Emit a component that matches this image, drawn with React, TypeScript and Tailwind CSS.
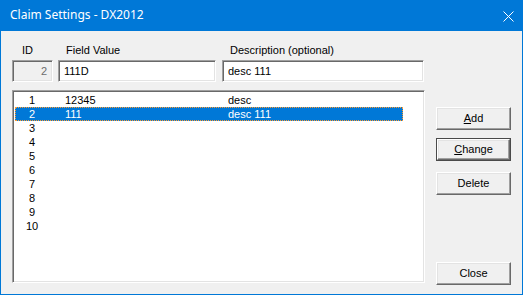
import React from "react";

const sunken =
  "border border-t-[#a0a0a0] border-l-[#a0a0a0] border-r-white border-b-white shadow-[inset_1px_1px_0_#696969,inset_-1px_-1px_0_#e3e3e3]";

function Btn({ children, def, className = "" }: { children: React.ReactNode; def?: boolean; className?: string }) {
  if (def) {
    return (
      <div className={`w-[75px] h-[23px] border border-[#4a4a4a] ${className}`}>
        <div className="w-full h-full border border-t-white border-l-white border-r-[#696969] border-b-[#696969] shadow-[inset_-1px_-1px_0_#a0a0a0,inset_1px_1px_0_#e3e3e3] bg-[#f0f0f0] flex items-center justify-center leading-[13px]">
          {children}
        </div>
      </div>
    );
  }
  return (
    <div
      className={`w-[75px] h-[23px] border border-t-white border-l-white border-r-[#696969] border-b-[#696969] shadow-[inset_-1px_-1px_0_#a0a0a0,inset_1px_1px_0_#e3e3e3] bg-[#f0f0f0] flex items-center justify-center leading-[13px] ${className}`}
    >
      {children}
    </div>
  );
}

const rows = [
  { id: "1", val: "12345", desc: "desc" },
  { id: "2", val: "111", desc: "desc 111", sel: true },
  { id: "3" },
  { id: "4" },
  { id: "5" },
  { id: "6" },
  { id: "7" },
  { id: "8" },
  { id: "9" },
  { id: "10" },
] as { id: string; val?: string; desc?: string; sel?: boolean }[];

export default function App() {
  return (
    <div
      className="w-[523px] h-[295px] bg-[#0078d7] flex flex-col text-[11px] text-black"
      style={{ fontFamily: '"Liberation Sans", Arial, sans-serif' }}
    >
      <div className="h-[31px] flex items-center justify-between pl-[10px] pr-[10px] text-white">
        <span className="text-[12px] leading-[16px] pb-[1px]" style={{ fontFamily: '"Noto Sans", "Liberation Sans", sans-serif' }}>
          Claim Settings - DX2012
        </span>
        <svg width="11" height="11" viewBox="0 0 11 11" className="-mr-[1px] mt-[1px]">
          <path d="M0.5 0.5 L10.5 10.5 M10.5 0.5 L0.5 10.5" stroke="white" strokeWidth="1" />
        </svg>
      </div>
      <div className="flex-1 mx-[1px] mb-[1px] bg-[#f0f0f0] flex pl-[11px]">
        <div className="w-[413px] flex flex-col">
          <div className="pt-[13px] h-[29px] flex leading-[13px]">
            <span className="ml-[10px] w-[44px]">ID</span>
            <span className="w-[164px]">Field Value</span>
            <span>Description (optional)</span>
          </div>
          <div className="flex h-[22px]">
            <div className={`${sunken} w-[41px] h-[22px] flex items-center justify-end pr-[5px] text-[#6d6d6d] bg-[#f0f0f0]`}>2</div>
            <div className={`${sunken} ml-[5px] w-[158px] h-[22px] flex items-center pl-[5px] bg-white`}>111D</div>
            <div className={`${sunken} ml-[6px] w-[202px] h-[22px] flex items-center pl-[5px] bg-white`}>desc 111</div>
          </div>
          <div className={`${sunken} mt-[8px] h-[193px] w-[413px] bg-white pt-[2px] pl-[2px]`}>
            {rows.map((r) => (
              <div
                key={r.id}
                className={`h-[14px] w-[388px] flex leading-[14px] ${
                  r.sel ? "bg-[#0078d7] text-white outline outline-1 outline-dotted outline-[#ff9b2f] -outline-offset-1" : ""
                }`}
              >
                <span className="w-[34px] text-center">{r.id}</span>
                <span className="ml-[16px] w-[163px]">{r.val}</span>
                <span>{r.desc}</span>
              </div>
            ))}
          </div>
        </div>
        <div className="ml-[11px] flex flex-col pt-[76px]">
          <Btn>
            <span>
              <span className="underline">A</span>dd
            </span>
          </Btn>
          <Btn def className="mt-[8px]">
            <span>
              <span className="underline">C</span>hange
            </span>
          </Btn>
          <Btn className="mt-[11px]">Delete</Btn>
          <Btn className="mt-[67px]">Close</Btn>
        </div>
      </div>
    </div>
  );
}
